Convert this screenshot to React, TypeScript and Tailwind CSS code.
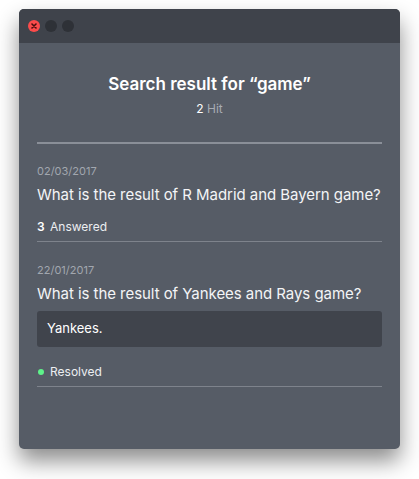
import React from "react";

export default function App() {
  return (
    <div className="w-[419px] h-[479px] bg-white" style={{ fontFamily: "Inter, 'Helvetica Neue', Arial, sans-serif" }}>
      <div className="pt-[9px] pl-[19px]">
        <div className="w-[381px] h-[440px] rounded-[5px] overflow-hidden bg-[#565c66] shadow-[0_12px_22px_rgba(0,0,0,0.45)] flex flex-col">
          <div className="h-[34px] bg-[#3f434b] flex items-center pl-[9px] gap-[5px]">
            <div className="w-[12px] h-[12px] rounded-full bg-[#fc4b4b] flex items-center justify-center">
              <svg width="6" height="6" viewBox="0 0 6 6">
                <path d="M1 1 L5 5 M5 1 L1 5" stroke="#4a0d0d" strokeWidth="1.6" strokeLinecap="round" />
              </svg>
            </div>
            <div className="w-[12px] h-[12px] rounded-full bg-[#2e3137]" />
            <div className="w-[12px] h-[12px] rounded-full bg-[#2e3137]" />
          </div>
          <div className="px-[18px] flex flex-col">
            <div className="pt-[30px] text-center text-white font-semibold text-[17px] leading-[22px]">
              Search result for “game”
            </div>
            <div className="mt-[6px] text-center text-[12px] leading-[16px]">
              <span className="text-white">2</span> <span className="text-[#a6abb3]">Hit</span>
            </div>
            <div className="mt-[25px] h-[2px] bg-[#8a8f98]" />

            <div className="mt-[20px] text-[11px] leading-[14px] text-[#a2a7af]">02/03/2017</div>
            <div className="mt-[7px] text-[15px] leading-[20px] tracking-[-0.05px] whitespace-nowrap text-[#f3f4f6]">What is the result of R Madrid and Bayern game?</div>
            <div className="mt-[14px] text-[12px] leading-[16px] text-[#eceef1]">
              <span className="font-semibold text-white">3</span> <span className="ml-[2px]">Answered</span>
            </div>
            <div className="mt-[6px] h-px bg-[#7e838c]" />

            <div className="mt-[21px] text-[11px] leading-[14px] text-[#a2a7af]">22/01/2017</div>
            <div className="mt-[7px] text-[15px] leading-[20px] tracking-[-0.05px] whitespace-nowrap text-[#f3f4f6]">What is the result of Yankees and Rays game?</div>
            <div className="mt-[7px] h-[36px] rounded-[3px] bg-[#40444c] flex items-center px-[10px] text-[13px] text-white">
              Yankees.
            </div>
            <div className="mt-[17px] flex items-center text-[12px] leading-[16px] text-[#eceef1]">
              <span className="w-[6px] h-[6px] rounded-full bg-[#5ef28a] ml-[1px] mr-[6px]" />
              Resolved
            </div>
            <div className="mt-[6px] h-px bg-[#7e838c]" />
          </div>
        </div>
      </div>
    </div>
  );
}
